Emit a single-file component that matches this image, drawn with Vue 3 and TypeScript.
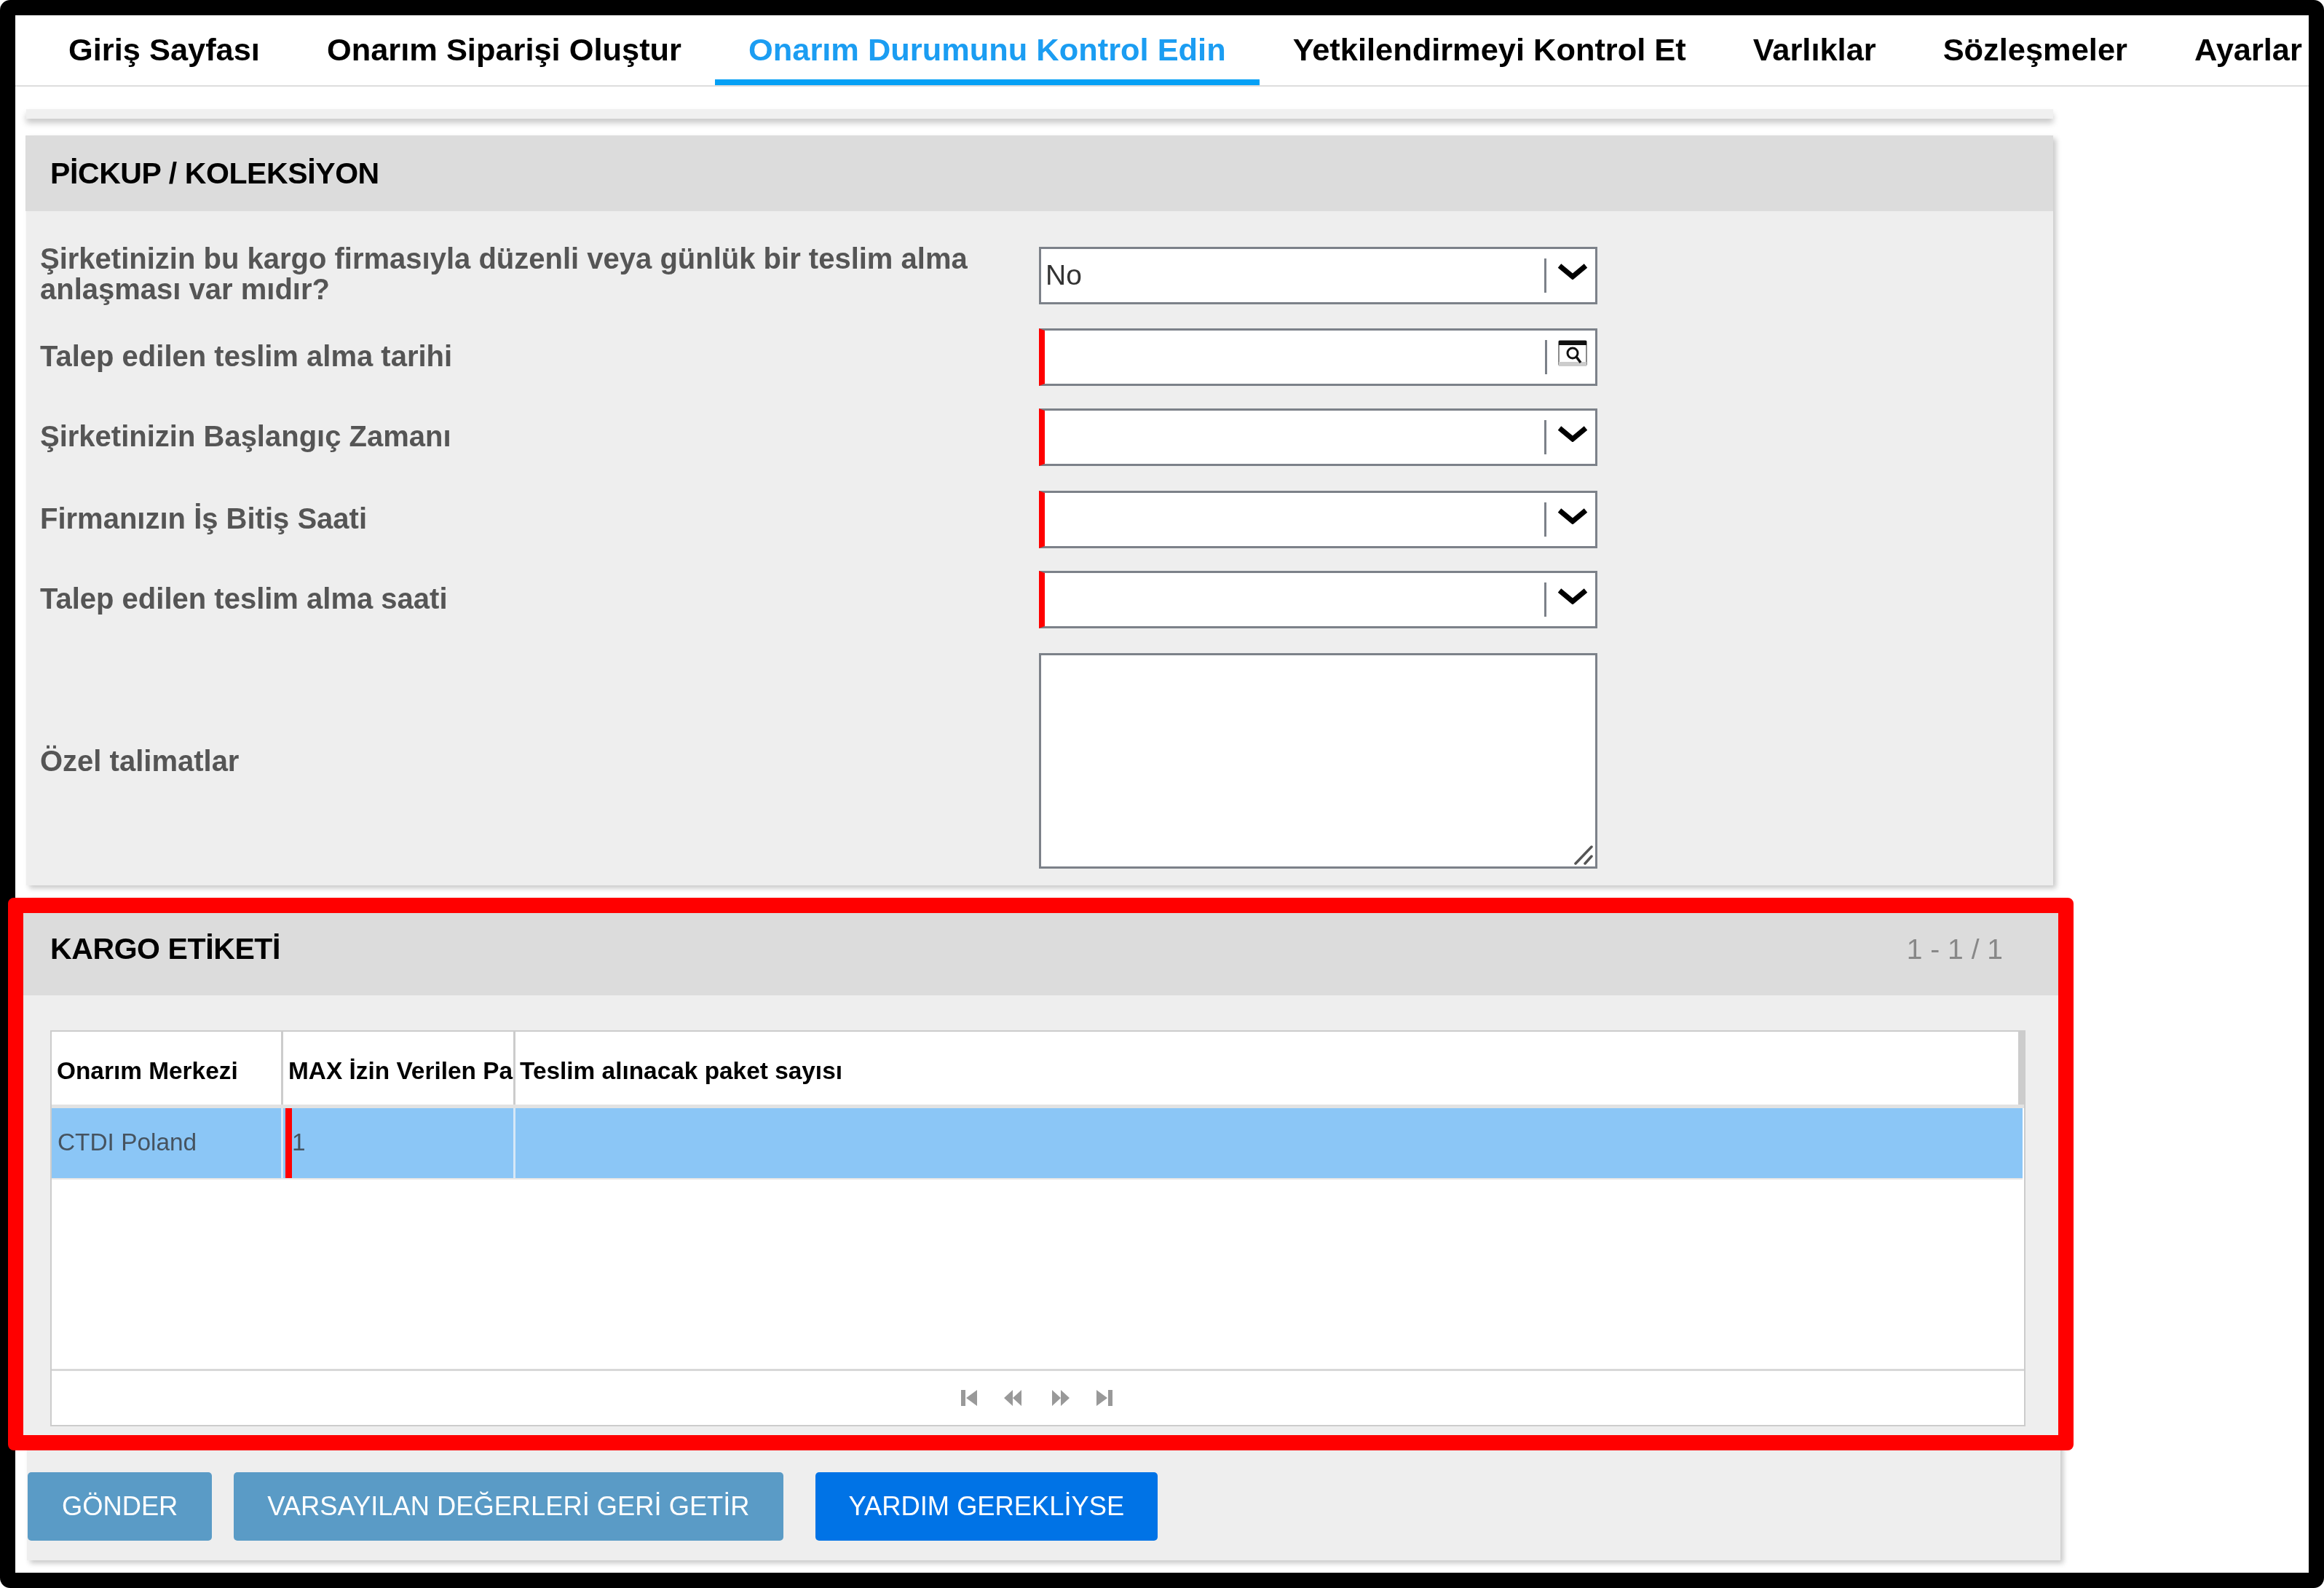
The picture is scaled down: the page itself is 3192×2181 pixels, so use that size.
<script setup lang="ts">
const tabs = [
  { label: 'Giriş Sayfası', active: false },
  { label: 'Onarım Siparişi Oluştur', active: false },
  { label: 'Onarım Durumunu Kontrol Edin', active: true },
  { label: 'Yetkilendirmeyi Kontrol Et', active: false },
  { label: 'Varlıklar', active: false },
  { label: 'Sözleşmeler', active: false },
  { label: 'Ayarlar', active: false },
]

const fields = [
  { label: 'Şirketinizin bu kargo firmasıyla düzenli veya günlük bir teslim alma anlaşması var mıdır?', value: 'No', required: false, icon: 'chevron' },
  { label: 'Talep edilen teslim alma tarihi', value: '', required: true, icon: 'calendar' },
  { label: 'Şirketinizin Başlangıç Zamanı', value: '', required: true, icon: 'chevron' },
  { label: 'Firmanızın İş Bitiş Saati', value: '', required: true, icon: 'chevron' },
  { label: 'Talep edilen teslim alma saati', value: '', required: true, icon: 'chevron' },
]
</script>

<template>
  <div class="frame">
    <nav class="tabs">
      <a v-for="tab in tabs" :key="tab.label" class="tab" :class="{ active: tab.active }">{{ tab.label }}</a>
    </nav>

    <main class="content">
      <div class="stub"></div>

      <section class="panel">
        <header class="panel-head"><h2>PİCKUP / KOLEKSİYON</h2></header>
        <div class="form">
          <div v-for="field in fields" :key="field.label" class="row">
            <label class="label">{{ field.label }}</label>
            <div class="control" :class="{ required: field.required }">
              <span class="value">{{ field.value }}</span>
              <span class="divider"></span>
              <svg v-if="field.icon === 'chevron'" class="chevron" viewBox="0 0 42 22">
                <path d="M3 3 L21 18 L39 3" fill="none" stroke="#000" stroke-width="7" />
              </svg>
              <svg v-else class="calendar" viewBox="0 0 40 36">
                <rect x="1" y="1" width="38" height="34" rx="2" fill="#fff" stroke="#666" stroke-width="1.5" />
                <rect x="1" y="1" width="38" height="6" fill="#111" />
                <rect x="1" y="30" width="38" height="6" fill="#ccc" />
                <circle cx="20" cy="18" r="7" fill="none" stroke="#111" stroke-width="3" />
                <path d="M25 23 L31 31" stroke="#111" stroke-width="3.5" />
              </svg>
            </div>
          </div>
          <div class="row row-text">
            <label class="label">Özel talimatlar</label>
            <div class="control area">
              <svg class="grip" viewBox="0 0 28 28">
                <path d="M3 26 L25 3 M16 26 L25 16" stroke="#555" stroke-width="3.5" stroke-linecap="round" fill="none" />
              </svg>
            </div>
          </div>
        </div>
      </section>

      <section class="lower">
        <div class="marked">
          <header class="marked-head">
            <h2>KARGO ETİKETİ</h2>
            <span class="count">1 - 1 / 1</span>
          </header>
          <div class="marked-body">
            <div class="table">
              <div class="thead">
                <div class="th">Onarım Merkezi</div>
                <div class="th">MAX İzin Verilen Pa</div>
                <div class="th last">Teslim alınacak paket sayısı</div>
              </div>
              <div class="tbody">
                <div class="tr">
                  <div class="td">CTDI Poland</div>
                  <div class="td req">1</div>
                  <div class="td"></div>
                </div>
              </div>
              <div class="pager">
                <svg class="pg" viewBox="0 0 24 22"><path d="M1 0h6v22H1zM23 0v22L8 11z" /></svg>
                <svg class="pg wide" viewBox="0 0 26 22"><path d="M13 0v22L1 11zM25 0v22L13 11z" /></svg>
                <svg class="pg wide mid" viewBox="0 0 26 22"><path d="M1 0v22l12-11zM13 0v22l12-11z" /></svg>
                <svg class="pg" viewBox="0 0 24 22"><path d="M1 0v22l15-11zM17 0h6v22h-6z" /></svg>
              </div>
            </div>
          </div>
        </div>
        <div class="actions">
          <button class="btn muted">GÖNDER</button>
          <button class="btn muted second">VARSAYILAN DEĞERLERİ GERİ GETİR</button>
          <button class="btn primary third">YARDIM GEREKLİYSE</button>
        </div>
      </section>
    </main>
  </div>
</template>

<style>
html, body { margin: 0; background: #fff; }
</style>

<style scoped>
.frame {
  box-sizing: border-box;
  width: 3192px;
  height: 2181px;
  border: 21px solid #000;
  border-radius: 14px;
  background: #fff;
  font-family: "Liberation Sans", Arial, sans-serif;
  filter: blur(0.7px);
}

.tabs {
  box-sizing: border-box;
  display: flex;
  height: 98px;
  padding-left: 27px;
  border-bottom: 2px solid #ddd;
  white-space: nowrap;
}
.tab {
  box-sizing: border-box;
  height: 96px;
  padding: 6px 46px 0;
  border-bottom: 8px solid transparent;
  display: flex;
  align-items: center;
  flex: none;
  font-size: 43.4px;
  font-weight: 700;
  color: #000;
}
.tab.active {
  color: #1b9df2;
  border-bottom-color: #05a0f5;
}

.content { padding-left: 15px; }

.stub {
  width: 2784px;
  height: 13px;
  margin-top: 31px;
  background: #f0f0f0;
  box-shadow: 0 6px 9px rgba(0, 0, 0, 0.22);
}

.panel {
  width: 2784px;
  margin-top: 23px;
  background: #eee;
  box-shadow: 4px 4px 7px rgba(0, 0, 0, 0.22);
}
.panel-head {
  box-sizing: border-box;
  height: 104px;
  margin-left: -1px;
  padding-left: 34px;
  display: flex;
  align-items: center;
  background: #dcdcdc;
}
h2 {
  margin: 0;
  font-size: 41px;
  font-weight: 700;
  color: #000;
  letter-spacing: -0.4px;
}

.form {
  box-sizing: border-box;
  height: 926px;
  padding: 48px 0 0 19px;
}
.row {
  display: grid;
  grid-template-columns: 1372px 767px;
  align-items: center;
  margin-bottom: 31px;
}
.row:nth-child(1) { margin-bottom: 33px; }
.row:nth-child(3) { margin-bottom: 34px; }
.label {
  margin: -4px 0;
  padding-bottom: 4px;
  font-size: 40px;
  line-height: 42px;
  font-weight: 700;
  color: #555;
  max-width: 1320px;
}
.control {
  box-sizing: border-box;
  height: 79px;
  position: relative;
  display: flex;
  align-items: center;
  background: #fff;
  border: 3px solid #7c8189;
}
.control.required { border-left: 8px solid #f00; }
.value {
  flex: 1;
  padding-left: 6px;
  font-size: 39px;
  color: #333;
}
.divider {
  width: 3px;
  height: 47px;
  background: #7c8189;
}
.chevron {
  width: 42px;
  height: 22px;
  margin: 0 10px 10px 15px;
}
.calendar {
  width: 40px;
  height: 36px;
  margin: 0 11px 11px 15px;
}
.row-text { margin-bottom: 0; margin-top: 34px; }
.row-text .label { padding-bottom: 0; }
.control.area { height: 296px; }
.grip {
  position: absolute;
  right: 2px;
  bottom: 2px;
  width: 28px;
  height: 28px;
}

.lower {
  width: 2793px;
  margin: 17px 0 0 1px;
  background: #eee;
  box-shadow: 4px 4px 7px rgba(0, 0, 0, 0.22);
}
.marked {
  box-sizing: border-box;
  width: 2837px;
  margin-left: -26px;
  border: 21px solid #f00;
  border-radius: 8px;
  background: #eee;
  position: relative;
}
.marked-head {
  box-sizing: border-box;
  height: 113px;
  padding: 0 76px 14px 37px;
  display: flex;
  align-items: center;
  justify-content: space-between;
  background: #dcdcdc;
}
.count {
  font-size: 39px;
  color: #888;
}
.marked-body { padding: 48px 45px 12px 37px; }
.table {
  box-sizing: border-box;
  height: 544px;
  display: flex;
  flex-direction: column;
  background: #fff;
  border: 2px solid #ccc;
}
.thead {
  box-sizing: border-box;
  height: 105px;
  border-bottom: 5px solid #e2e2e2;
  display: grid;
  grid-template-columns: 318px 319px 1fr;
}
.th {
  padding: 8px 0 0 7px;
  display: flex;
  align-items: center;
  font-size: 33.4px;
  font-weight: 700;
  color: #000;
  white-space: nowrap;
  border-right: 3px solid #ccc;
}
.th.last { border-right-width: 8px; padding-left: 6px; }
.tbody {
  flex: 1;
  padding-right: 2px;
}
.tr {
  height: 96px;
  display: grid;
  grid-template-columns: 318px 319px 1fr;
  background: #8bc6f6;
  box-shadow: 0 2px 0 #e6e6e6;
}
.td {
  padding: 0 0 2px 8px;
  display: flex;
  align-items: center;
  font-size: 33.4px;
  color: #46535f;
  border-right: 3px solid #d6e8f7;
}
.td:last-child { border-right: 0; }
.td.req {
  margin-left: 3px;
  padding-left: 0;
  border-left: 9px solid #f00;
}
.pager {
  box-sizing: border-box;
  height: 77px;
  padding-right: 3px;
  border-top: 3px solid #d8d8d8;
  display: flex;
  align-items: center;
  justify-content: center;
  gap: 35px;
}
.pg {
  width: 24px;
  height: 22px;
  fill: #999;
}
.pg.wide { width: 26px; }
.pg.mid { margin-left: 5px; }

.actions {
  box-sizing: border-box;
  height: 151px;
  padding: 30px 0 0 1px;
  display: flex;
  align-items: flex-start;
}
.btn {
  height: 94px;
  padding: 0 47px;
  border: 0;
  border-radius: 5px;
  font-family: inherit;
  font-size: 36.3px;
  color: #fff;
  white-space: nowrap;
}
.btn.muted { background: #5a9bc6; }
.btn.primary { background: #0073e6; }
.btn.second { margin-left: 30px; padding: 0 46px; }
.btn.third { margin-left: 44px; padding: 0 46px; }
</style>
